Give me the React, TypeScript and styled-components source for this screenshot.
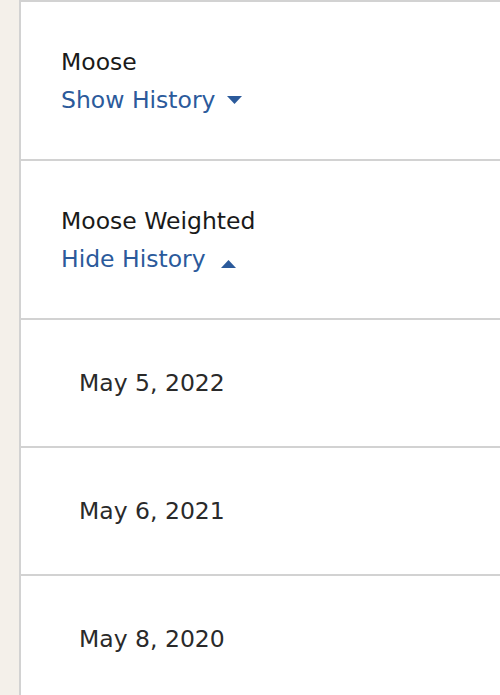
import React, { useState } from "react";
import styled, { createGlobalStyle } from "styled-components";

const GlobalStyle = createGlobalStyle`
  html, body {
    margin: 0;
    padding: 0;
    background: #ffffff;
  }
  body {
    font-family: "DejaVu Sans", Verdana, sans-serif;
  }
`;

type Metric = {
  name: string;
  dates: string[];
};

const metrics: Metric[] = [
  { name: "Moose", dates: ["May 3, 2022"] },
  { name: "Moose Weighted", dates: ["May 5, 2022", "May 6, 2021", "May 8, 2020"] },
];

function App() {
  const [open, setOpen] = useState<Record<string, boolean>>({ "Moose Weighted": true });

  const toggle = (name: string) => {
    setOpen((prev) => ({ ...prev, [name]: !prev[name] }));
  };

  return (
    <React.Fragment>
      <GlobalStyle />
      <Page>
        <Gutter />
        <Panel>
          {metrics.map((m) => {
            const isOpen = !!open[m.name];
            return (
              <React.Fragment key={m.name}>
                <MetricRow>
                  <MetricName>{m.name}</MetricName>
                  <HistoryToggle onClick={() => toggle(m.name)}>
                    {isOpen ? "Hide History" : "Show History"}
                    <Caret $open={isOpen} width="15" height="8" viewBox="0 0 15 8">
                      {isOpen ? (
                        <path d="M0 8 L7.5 0 L15 8 Z" fill="currentColor" />
                      ) : (
                        <path d="M0 0 L15 0 L7.5 8 Z" fill="currentColor" />
                      )}
                    </Caret>
                  </HistoryToggle>
                </MetricRow>
                {isOpen &&
                  m.dates.map((d) => (
                    <DateRow key={d}>
                      <DateText>{d}</DateText>
                    </DateRow>
                  ))}
              </React.Fragment>
            );
          })}
        </Panel>
      </Page>
    </React.Fragment>
  );
}

export default App;

const Page = styled.div`
  display: flex;
  min-height: 695px;
  background: #f4f0ea;
`;

const Gutter = styled.div`
  width: 19px;
  flex-shrink: 0;
`;

const Panel = styled.div`
  flex: 1;
  background: #ffffff;
  border-left: 2px solid #d2d2d2;
  border-top: 2px solid #d2d2d2;
`;

const MetricRow = styled.div`
  display: flex;
  flex-direction: column;
  align-items: flex-start;
  padding: 41px 0 40px 40px;
  border-bottom: 2px solid #d2d2d2;
  font-size: 23.5px;
  line-height: 38px;
`;

const MetricName = styled.div`
  color: #1a1a1a;
`;

const HistoryToggle = styled.button`
  display: inline-flex;
  align-items: center;
  padding: 0;
  border: none;
  background: none;
  font: inherit;
  line-height: 38px;
  color: #2b5a9b;
  cursor: pointer;
`;

const Caret = styled.svg<{ $open: boolean }>`
  margin-left: ${(p) => (p.$open ? "15px" : "12px")};
  position: relative;
  top: ${(p) => (p.$open ? "5px" : "0px")};
`;

const DateRow = styled.div`
  padding: 44px 0 44px 58px;
  border-bottom: 2px solid #d2d2d2;
`;

const DateText = styled.div`
  font-size: 23.5px;
  line-height: 38px;
  color: #2a2a2a;
`;
